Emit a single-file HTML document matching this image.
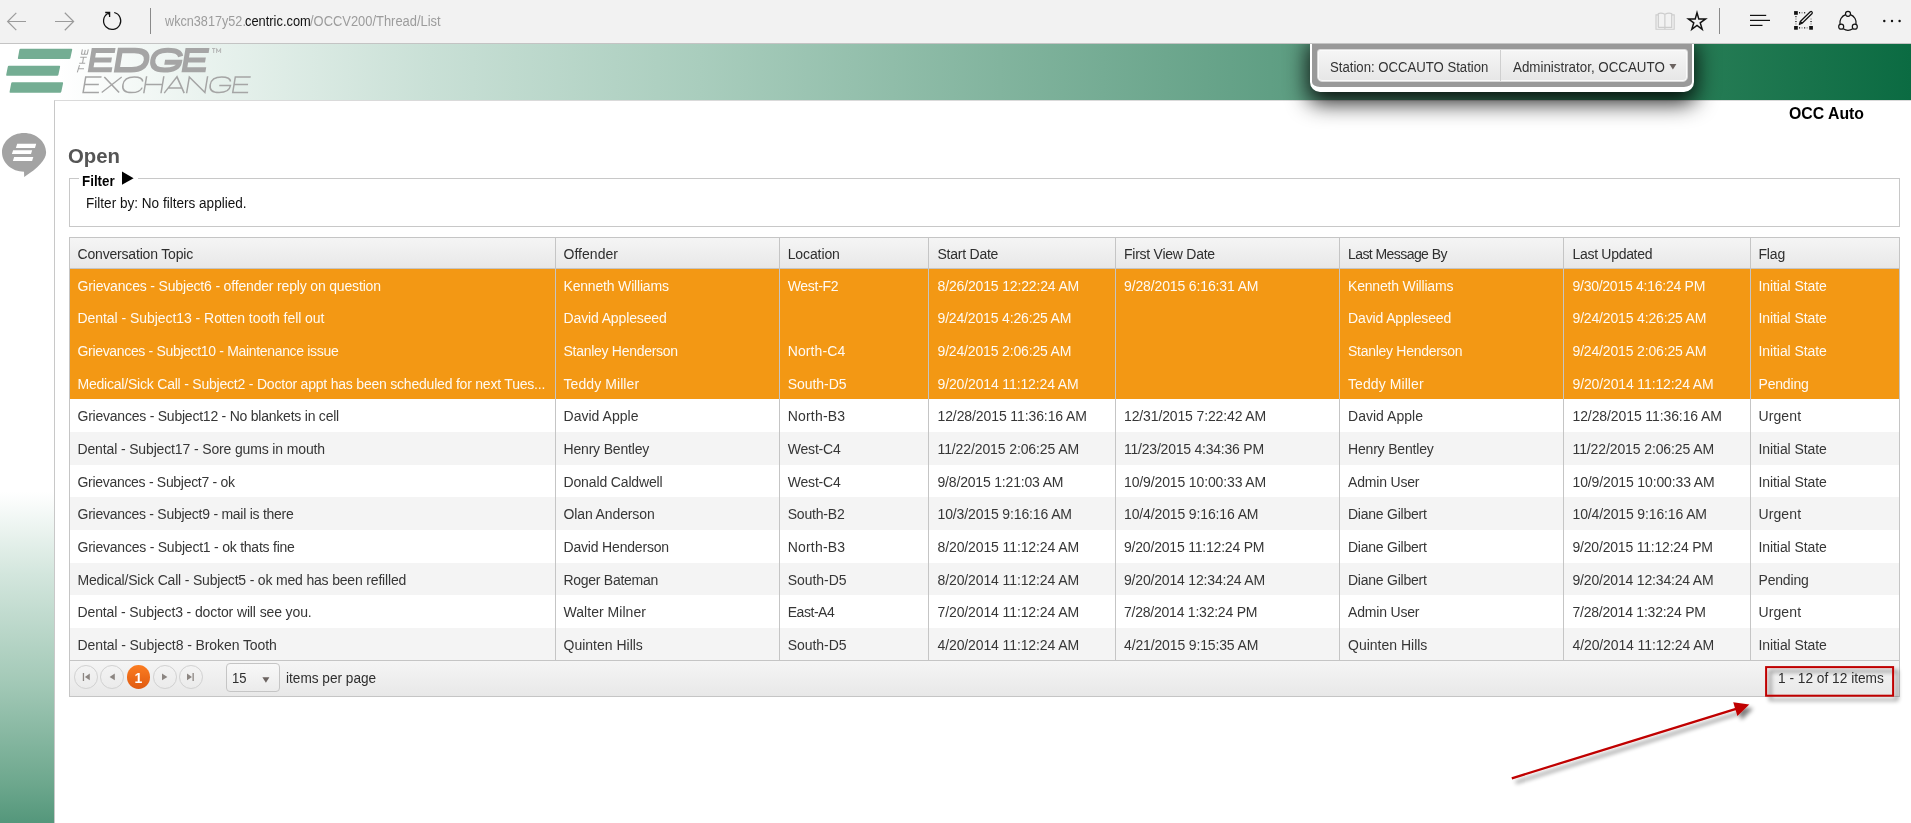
<!DOCTYPE html>
<html>
<head>
<meta charset="utf-8">
<title>Open</title>
<style>
*{box-sizing:border-box;}
html,body{margin:0;padding:0;}
body{width:1911px;height:823px;overflow:hidden;background:#fff;position:relative;font-family:"Liberation Sans",sans-serif;color:#2e2e2e;}
#w{position:absolute;left:0;top:0;width:1911px;height:823px;overflow:hidden;will-change:transform;}
.abs{position:absolute;}
/* browser toolbar */
#tb{left:0;top:0;width:1911px;height:44px;background:#f2f2f2;border-bottom:1px solid #c4c4c4;z-index:20;}
#u2{color:#111 !important;}
.u{top:12px;font-size:14px;line-height:18px;color:#9c9c9c;white-space:nowrap;transform-origin:0 0;z-index:21;}
/* header */
#hdr{left:0;top:44px;width:1911px;height:56px;background:linear-gradient(to right,#ffffff 0px,#ffffff 60px,#eaf3ef 200px,#c9e0d6 430px,#a9cdbd 700px,#82b49e 1000px,#609f84 1270px,#267c55 1700px,#0b6b42 1911px);}
/* sidebar */
#side{left:0;top:100px;width:54px;height:723px;background:linear-gradient(to bottom,#ffffff 0px,#ffffff 392px,#d3e6dd 474px,#a3c9b7 582px,#6ea88e 682px,#54977b 723px);}
#main{left:54px;top:100px;width:1857px;height:723px;background:#fff;border-left:1px solid #c8c8c8;border-top:1px solid #dadada;}
/* user panel */
#panel{left:1310px;top:36px;width:384px;height:56px;background:#999;border:solid #fff;border-width:2px 2px 5px 2px;border-radius:0 0 10px 10px;box-shadow:0 9px 22px 2px rgba(0,0,0,.88);z-index:10;}
#menu{left:1317px;top:49px;width:371px;height:33px;background:linear-gradient(#f6f6f6,#e6e6e6);border:1px solid #d8d8d8;border-radius:3px 3px 5px 5px;z-index:11;box-shadow:inset 0 0 0 1px #fafafa;}
.mtxt{top:58px;font-size:14px;line-height:18px;white-space:nowrap;color:#333;z-index:12;transform-origin:0 0;}
/* text */
#occ{top:103.7px;font-weight:bold;font-size:15.8px;line-height:20px;color:#000;white-space:nowrap;transform-origin:0 0;}
#open{top:143px;font-weight:bold;font-size:20px;line-height:26px;color:#555;white-space:nowrap;transform-origin:0 0;}
#fs{left:69px;top:178px;width:1831px;height:49px;border:1px solid #c8c8c8;}
#leg{left:79px;top:170px;width:59px;height:18px;background:#fff;}
#legt{top:172px;font-weight:bold;font-size:14px;line-height:18px;color:#000;white-space:nowrap;transform-origin:0 0;}
#fby{top:194px;font-size:14px;line-height:18px;white-space:nowrap;color:#111;transform-origin:0 0;}
/* grid */
#grid{left:69px;top:237px;width:1831px;height:460px;border:1px solid #c5c5c5;}
#gh{left:70px;top:238px;width:1829px;height:31px;background:linear-gradient(#f5f5f5,#e8e8e8);border-bottom:1px solid #c5c5c5;}
.row{left:70px;width:1829px;color:#363636;}
.row.sel{color:#fffaf3;}
.alt{background:#f4f4f4;}
.sel{background:#f39814;color:#fffaf3;}
.c{position:absolute;top:1px;font-size:14px;letter-spacing:-0.18px;line-height:32px;white-space:nowrap;}
.h .c{top:1px;line-height:31px;}
.vl{top:238px;width:1px;height:422px;background:#c5c5c5;}
#pg{left:70px;top:660px;width:1829px;height:36px;background:linear-gradient(#f5f5f5,#e8e8e8);border-top:1px solid #c5c5c5;}
.pb{top:665px;width:23.8px;height:23.8px;border-radius:50%;border:1px solid #d1d1d1;}
#p1{background:linear-gradient(#fb7d22,#e05a10);}
#p1t{left:134.4px;top:669px;font-weight:bold;font-size:14px;line-height:18px;color:#fff;}
.pt{top:669px;font-size:14px;line-height:18px;color:#2e2e2e;white-space:nowrap;transform-origin:0 0;}
#sel{left:226px;top:663px;width:54px;height:29px;border:1px solid #c5c5c5;border-radius:4px;background:linear-gradient(#f8f8f8,#ebebeb);}
</style>
</head>
<body>
<div id="w">
<div id="hdr" class="abs"></div>
<div id="side" class="abs"></div>
<div id="main" class="abs"></div>
<div id="tb" class="abs"></div>
<svg class="abs" style="left:0;top:0;z-index:21" width="1911" height="44" viewBox="0 0 1911 44" fill="none" stroke-linecap="butt">
<g stroke="#9b9b9b" stroke-width="1.2">
<path d="M7.5 21.5H26M16.3 12.8L7.6 21.5L16.3 30.2"/>
<path d="M55 21.5H73.8M64.8 12.8L73.6 21.5L64.8 30.2"/>
</g>
<g stroke="#111" stroke-width="1.25">
<path d="M114.2 12.5A8.6 8.6 0 1 1 107.7 13.5"/>
<path d="M105.2 12.5H109.6V16.9" stroke-width="1.3"/>
<path d="M106.4 12.6H109.5V15.6Z" fill="#111" stroke="none"/>
</g>
<path d="M150.5 8V34" stroke="#8a8a8a" stroke-width="1"/>
<g stroke="#cdcdcd" stroke-width="1.1">
<path d="M1658.2 14.9H1656V29.2H1674.2V14.9H1672"/>
<path d="M1658.3 27.4V13.6Q1661.5 12.6 1664.9 14.2Q1668.3 12.6 1671.7 13.6V27.4H1665.4M1658.3 27.4H1664.4M1664.9 14.2V29.2" stroke-width="1.2"/>
</g>
<path d="M1697.0 12.7L1698.8 18.9L1705.6 18.9L1700.2 22.8L1702.2 29.4L1697.0 25.4L1691.8 29.4L1693.8 22.8L1688.4 18.9L1695.2 18.9Z" stroke="#111" stroke-width="1.45" stroke-linejoin="miter" stroke-miterlimit="10"/>
<path d="M1719.5 8V34" stroke="#8a8a8a" stroke-width="1"/>
<g fill="#111" stroke="none">
<rect x="1750" y="14.8" width="16.2" height="1.2"/><rect x="1750" y="19.8" width="20" height="1.2"/><rect x="1750" y="24.8" width="12.5" height="1.2"/>
</g>
<g fill="#111" stroke="none">
<rect x="1794.1" y="11.1" width="3.7" height="3.7"/><rect x="1794.1" y="26" width="3.7" height="3.7"/><rect x="1809.2" y="26" width="3.7" height="3.7"/>
<rect x="1799" y="12.1" width="1.1" height="1.3"/><rect x="1801.5" y="12.1" width="1.1" height="1.3" opacity=".45"/><rect x="1804.1" y="12.1" width="1.1" height="1.3"/>
<rect x="1799" y="27.2" width="1.1" height="1.3"/><rect x="1801.5" y="27.2" width="1.1" height="1.3" opacity=".45"/><rect x="1804.1" y="27.2" width="1.1" height="1.3"/><rect x="1806.6" y="27.2" width="1.1" height="1.3" opacity=".45"/>
<rect x="1795.3" y="16.1" width="1.3" height="1.1"/><rect x="1795.3" y="18.5" width="1.3" height="1.1" opacity=".45"/><rect x="1795.3" y="21" width="1.3" height="1.1"/><rect x="1795.3" y="23.4" width="1.3" height="1.1" opacity=".45"/>
<rect x="1810.4" y="18.5" width="1.3" height="1.1" opacity=".45"/><rect x="1810.4" y="21" width="1.3" height="1.1"/><rect x="1810.4" y="23.4" width="1.3" height="1.1" opacity=".45"/>
</g>
<path d="M1810.3 11.7L1800.3 21.5L1799.4 24.5L1802.1 23.3L1812.1 13.5A1.3 1.3 0 0 0 1810.3 11.7ZM1800.3 21.5L1802.1 23.3" stroke="#111" stroke-width="1.25" fill="#f6f6f6" stroke-linejoin="round"/>
<g stroke="#111" stroke-width="1.2">
<path d="M1845.6 14.6A8.6 8.6 0 0 0 1840 24.4M1843.2 28.8A8.8 8.8 0 0 0 1852.8 28.8M1856 24.4A8.6 8.6 0 0 0 1850.4 14.6"/>
<circle cx="1848" cy="13.8" r="2.5"/><circle cx="1841.2" cy="26.7" r="2.5"/><circle cx="1854.8" cy="26.7" r="2.5"/>
</g>
<g fill="#111" stroke="none"><circle cx="1884.3" cy="21" r="1.2"/><circle cx="1892" cy="21" r="1.2"/><circle cx="1899.6" cy="21" r="1.2"/></g>
</svg>
<div id="u1" style="/*fit*/left:164.76px;transform:scaleX(0.9038)" class="abs u sx">wkcn3817y52.</div><div id="u2" style="/*fit*/left:245.05px;transform:scaleX(0.9193)" class="abs u sx">centric.com</div><div id="u3" style="/*fit*/left:310.05px;transform:scaleX(0.9222)" class="abs u sx">/OCCV200/Thread/List</div>
<svg class="abs" style="left:0;top:44px" width="270" height="57" viewBox="0 44 270 57">
<g fill="#74ad93">
<path d="M20.5 48.8H71.5Q72.4 48.8 72.2 49.8L70.4 58Q70.2 59 69.2 59H18.6Q17.6 59 17.9 58L19.4 49.8Q19.6 48.8 20.5 48.8Z"/>
<path d="M8.9 65.8H59.4Q60.3 65.8 60.1 66.8L58.4 74.8Q58.2 75.8 57.2 75.8H6.9Q5.9 75.8 6.2 74.8L7.8 66.8Q8 65.8 8.9 65.8Z"/>
<path d="M12.3 82.3H62.4Q63.3 82.3 63.1 83.3L61.3 91.8Q61.1 92.8 60.1 92.8H10.3Q9.3 92.8 9.6 91.8L11.2 83.3Q11.4 82.3 12.3 82.3Z"/>
</g>
<g transform="translate(0,72.3) skewX(-9.5) translate(0,-72.3)" fill="none" stroke="#a5a5a5" stroke-width="5">
<path d="M111.5 50.5H90.2V69.8H111.5M90.2 60.1H109.5" stroke-linejoin="miter"/>
<path d="M116.5 50.5H131Q144.5 50.5 144.5 60.1Q144.5 69.8 131 69.8H116.5Z" stroke-width="5.4"/>
<path d="M178 56.5Q176 50.3 164 50.3Q150.8 50.3 150.8 60.1Q150.8 70 164 70Q177.5 70 177.8 62.3H163" />
<path d="M205.4 50.5H184V69.8H205.4M184 60.1H203.4"/>
</g>
<g transform="translate(0,93.2) skewX(-9.5) translate(0,-93.2)" fill="none" stroke="#a5a5a5" stroke-width="1.5">
<path d="M98.8 77H83V92.5H98.8M83 84.6H97.4"/>
<path d="M101.6 77L119 92.5M119 77L101.6 92.5"/>
<path d="M140.8 81.5Q139.5 77 131.5 77Q121.5 77 121.5 84.7Q121.5 92.6 131.5 92.6Q139.8 92.6 141.2 87.6"/>
<path d="M143.8 76.3V93.2M161 76.3V93.2M143.8 84.5H161"/>
<path d="M164.2 93.2L174.2 76.8L184.2 93.2M167.6 88H180.8"/>
<path d="M186.6 93.2V77L204.8 92.5V76.3"/>
<path d="M228.6 81.5Q227.3 77 219 77Q208.8 77 208.8 84.7Q208.8 92.6 219 92.6Q229.2 92.6 229.2 85.6H218"/>
<path d="M248 77H232.6V92.5H248M232.6 84.6H246.6"/>
</g>
<g fill="none" stroke="#a5a5a5" stroke-width="1">
<path d="M77.3 72.4L79.5 65.2M78.6 68.7H84M79.2 63.3H85.2M80.2 57.3H86.8M82.5 63.3L83.5 57.3M81.2 54.3H87.4M81.4 54.3L82.4 49.3M84.3 54.3L85.3 49.8M87.2 54.3L88.3 49.3" stroke-width="1.05"/>
<path d="M212 48.5H215.4M213.7 48.5V53M216.6 53V48.5L218.6 52L220.6 48.5V53" stroke-width=".9" stroke="#b0b0b0"/>
</g>
</svg>
<div id="panel" class="abs"></div>
<div id="menu" class="abs"></div>
<div class="abs" style="left:1500px;top:50px;width:1px;height:31px;background:#cfcfcf;z-index:12"></div>
<div class="abs mtxt sx" id="m1" style="/*fit*/left:1329.94px;transform:scaleX(0.9395)">Station: OCCAUTO Station</div>
<div class="abs mtxt sx" id="m2" style="/*fit*/left:1513.13px;transform:scaleX(0.9533)">Administrator, OCCAUTO</div>
<svg class="abs" style="left:1668px;top:63px;z-index:12" width="10" height="8" viewBox="0 0 10 8"><path d="M1.4 1H8.4L4.9 6.4Z" fill="#6b6360"/></svg>
<svg class="abs" style="left:0;top:125px" width="54" height="60" viewBox="0 125 54 60">
<path d="M24 132.9C36.2 132.9 46.1 141.6 46.1 152.3C46.1 160 38 168 24.2 177L24 171.7C11.8 171.7 2 163 2 152.3C2 141.6 11.8 132.9 24 132.9Z" fill="#a3a3a3"/>
<g fill="#fff">
<path d="M17.2 143.8H36.2L35 148H15.9Z"/>
<path d="M13.1 150.2H32.2L31 154H11.9Z"/>
<path d="M14.1 157H33.3L32.1 160.9H12.9Z"/>
</g>
</svg>
<div id="occ" style="/*fit*/left:1788.80px;transform:scaleX(1.0017)" class="abs sx">OCC Auto</div>
<div id="open" style="/*fit*/left:68.09px;transform:scaleX(1.0171)" class="abs sx">Open</div>
<div id="fs" class="abs"></div>
<div id="leg" class="abs"></div>
<div id="legt" style="/*fit*/left:81.93px;transform:scaleX(0.9552)" class="abs sx">Filter</div>
<svg class="abs" style="left:121px;top:170px" width="14" height="16" viewBox="0 0 14 16"><path d="M1 1.5L12.6 8.2L1 14.8Z" fill="#000"/></svg>
<div id="fby" style="/*fit*/left:85.92px;transform:scaleX(0.9690)" class="abs sx">Filter by: No filters applied.</div>
<!--GRID-S-->
<div id="grid" class="abs"></div>
<div id="gh" class="abs h">
<span class="c" style="left:7.5px">Conversation Topic</span>
<span class="c" style="left:493.5px;letter-spacing:0.03px">Offender</span>
<span class="c" style="left:717.7px;letter-spacing:-0.11px">Location</span>
<span class="c" style="left:867.5px;letter-spacing:-0.24px">Start Date</span>
<span class="c" style="left:1054.0px;letter-spacing:-0.25px">First View Date</span>
<span class="c" style="left:1278.0px;letter-spacing:-0.57px">Last Message By</span>
<span class="c" style="left:1502.5px;letter-spacing:-0.30px">Last Updated</span>
<span class="c" style="left:1688.5px">Flag</span>
</div>
<div class="abs row sel" style="top:269px;height:32px">
<span class="c" style="left:7.5px;letter-spacing:-0.17px">Grievances - Subject6 - offender reply on question</span>
<span class="c" style="left:493.5px">Kenneth Williams</span>
<span class="c" style="left:717.7px;letter-spacing:-0.28px">West-F2</span>
<span class="c" style="left:867.5px;letter-spacing:-0.15px">8/26/2015 12:22:24 AM</span>
<span class="c" style="left:1054.0px;letter-spacing:-0.13px">9/28/2015 6:16:31 AM</span>
<span class="c" style="left:1278.0px">Kenneth Williams</span>
<span class="c" style="left:1502.5px;letter-spacing:-0.26px">9/30/2015 4:16:24 PM</span>
<span class="c" style="left:1688.5px;letter-spacing:-0.08px">Initial State</span>
</div>
<div class="abs row sel" style="top:301px;height:33px">
<span class="c" style="left:7.5px;letter-spacing:-0.05px">Dental - Subject13 - Rotten tooth fell out</span>
<span class="c" style="left:493.5px;letter-spacing:-0.13px">David Appleseed</span>
<span class="c" style="left:867.5px;letter-spacing:-0.16px">9/24/2015 4:26:25 AM</span>
<span class="c" style="left:1278.0px;letter-spacing:-0.13px">David Appleseed</span>
<span class="c" style="left:1502.5px;letter-spacing:-0.16px">9/24/2015 4:26:25 AM</span>
<span class="c" style="left:1688.5px;letter-spacing:-0.08px">Initial State</span>
</div>
<div class="abs row sel" style="top:334px;height:33px">
<span class="c" style="left:7.5px;letter-spacing:-0.33px">Grievances - Subject10 - Maintenance issue</span>
<span class="c" style="left:493.5px;letter-spacing:-0.28px">Stanley Henderson</span>
<span class="c" style="left:717.7px;letter-spacing:0.10px">North-C4</span>
<span class="c" style="left:867.5px;letter-spacing:-0.16px">9/24/2015 2:06:25 AM</span>
<span class="c" style="left:1278.0px;letter-spacing:-0.28px">Stanley Henderson</span>
<span class="c" style="left:1502.5px;letter-spacing:-0.16px">9/24/2015 2:06:25 AM</span>
<span class="c" style="left:1688.5px;letter-spacing:-0.08px">Initial State</span>
</div>
<div class="abs row sel" style="top:367px;height:32px">
<span class="c" style="left:7.5px;letter-spacing:-0.21px">Medical/Sick Call - Subject2 - Doctor appt has been scheduled for next Tues...</span>
<span class="c" style="left:493.5px;letter-spacing:0.08px">Teddy Miller</span>
<span class="c" style="left:717.7px;letter-spacing:-0.03px">South-D5</span>
<span class="c" style="left:867.5px;letter-spacing:-0.13px">9/20/2014 11:12:24 AM</span>
<span class="c" style="left:1278.0px;letter-spacing:0.08px">Teddy Miller</span>
<span class="c" style="left:1502.5px;letter-spacing:-0.13px">9/20/2014 11:12:24 AM</span>
<span class="c" style="left:1688.5px">Pending</span>
</div>
<div class="abs row " style="top:399px;height:33px">
<span class="c" style="left:7.5px;letter-spacing:-0.23px">Grievances - Subject12 - No blankets in cell</span>
<span class="c" style="left:493.5px;letter-spacing:0.02px">David Apple</span>
<span class="c" style="left:717.7px;letter-spacing:0.20px">North-B3</span>
<span class="c" style="left:867.5px;letter-spacing:-0.10px">12/28/2015 11:36:16 AM</span>
<span class="c" style="left:1054.0px;letter-spacing:-0.13px">12/31/2015 7:22:42 AM</span>
<span class="c" style="left:1278.0px;letter-spacing:0.02px">David Apple</span>
<span class="c" style="left:1502.5px;letter-spacing:-0.10px">12/28/2015 11:36:16 AM</span>
<span class="c" style="left:1688.5px;letter-spacing:0.10px">Urgent</span>
</div>
<div class="abs row alt" style="top:432px;height:33px">
<span class="c" style="left:7.5px;letter-spacing:-0.14px">Dental - Subject17 - Sore gums in mouth</span>
<span class="c" style="left:493.5px">Henry Bentley</span>
<span class="c" style="left:717.7px">West-C4</span>
<span class="c" style="left:867.5px;letter-spacing:-0.11px">11/22/2015 2:06:25 AM</span>
<span class="c" style="left:1054.0px;letter-spacing:-0.22px">11/23/2015 4:34:36 PM</span>
<span class="c" style="left:1278.0px">Henry Bentley</span>
<span class="c" style="left:1502.5px;letter-spacing:-0.11px">11/22/2015 2:06:25 AM</span>
<span class="c" style="left:1688.5px;letter-spacing:-0.08px">Initial State</span>
</div>
<div class="abs row " style="top:465px;height:32px">
<span class="c" style="left:7.5px;letter-spacing:-0.30px">Grievances - Subject7 - ok</span>
<span class="c" style="left:493.5px;letter-spacing:-0.14px">Donald Caldwell</span>
<span class="c" style="left:717.7px">West-C4</span>
<span class="c" style="left:867.5px">9/8/2015 1:21:03 AM</span>
<span class="c" style="left:1054.0px;letter-spacing:-0.13px">10/9/2015 10:00:33 AM</span>
<span class="c" style="left:1278.0px">Admin User</span>
<span class="c" style="left:1502.5px;letter-spacing:-0.13px">10/9/2015 10:00:33 AM</span>
<span class="c" style="left:1688.5px;letter-spacing:-0.08px">Initial State</span>
</div>
<div class="abs row alt" style="top:497px;height:33px">
<span class="c" style="left:7.5px;letter-spacing:-0.26px">Grievances - Subject9 - mail is there</span>
<span class="c" style="left:493.5px;letter-spacing:-0.12px">Olan Anderson</span>
<span class="c" style="left:717.7px">South-B2</span>
<span class="c" style="left:867.5px;letter-spacing:-0.13px">10/3/2015 9:16:16 AM</span>
<span class="c" style="left:1054.0px;letter-spacing:-0.13px">10/4/2015 9:16:16 AM</span>
<span class="c" style="left:1278.0px;letter-spacing:-0.24px">Diane Gilbert</span>
<span class="c" style="left:1502.5px;letter-spacing:-0.13px">10/4/2015 9:16:16 AM</span>
<span class="c" style="left:1688.5px;letter-spacing:0.10px">Urgent</span>
</div>
<div class="abs row " style="top:530px;height:33px">
<span class="c" style="left:7.5px;letter-spacing:-0.23px">Grievances - Subject1 - ok thats fine</span>
<span class="c" style="left:493.5px">David Henderson</span>
<span class="c" style="left:717.7px;letter-spacing:0.20px">North-B3</span>
<span class="c" style="left:867.5px;letter-spacing:-0.11px">8/20/2015 11:12:24 AM</span>
<span class="c" style="left:1054.0px;letter-spacing:-0.20px">9/20/2015 11:12:24 PM</span>
<span class="c" style="left:1278.0px;letter-spacing:-0.24px">Diane Gilbert</span>
<span class="c" style="left:1502.5px;letter-spacing:-0.20px">9/20/2015 11:12:24 PM</span>
<span class="c" style="left:1688.5px;letter-spacing:-0.08px">Initial State</span>
</div>
<div class="abs row alt" style="top:563px;height:32px">
<span class="c" style="left:7.5px">Medical/Sick Call - Subject5 - ok med has been refilled</span>
<span class="c" style="left:493.5px;letter-spacing:-0.28px">Roger Bateman</span>
<span class="c" style="left:717.7px;letter-spacing:-0.03px">South-D5</span>
<span class="c" style="left:867.5px;letter-spacing:-0.11px">8/20/2014 11:12:24 AM</span>
<span class="c" style="left:1054.0px;letter-spacing:-0.18px">9/20/2014 12:34:24 AM</span>
<span class="c" style="left:1278.0px;letter-spacing:-0.24px">Diane Gilbert</span>
<span class="c" style="left:1502.5px;letter-spacing:-0.18px">9/20/2014 12:34:24 AM</span>
<span class="c" style="left:1688.5px">Pending</span>
</div>
<div class="abs row " style="top:595px;height:33px">
<span class="c" style="left:7.5px;letter-spacing:-0.12px">Dental - Subject3 - doctor will see you.</span>
<span class="c" style="left:493.5px;letter-spacing:0.04px">Walter Milner</span>
<span class="c" style="left:717.7px;letter-spacing:-0.45px">East-A4</span>
<span class="c" style="left:867.5px;letter-spacing:-0.11px">7/20/2014 11:12:24 AM</span>
<span class="c" style="left:1054.0px;letter-spacing:-0.23px">7/28/2014 1:32:24 PM</span>
<span class="c" style="left:1278.0px">Admin User</span>
<span class="c" style="left:1502.5px;letter-spacing:-0.23px">7/28/2014 1:32:24 PM</span>
<span class="c" style="left:1688.5px;letter-spacing:0.10px">Urgent</span>
</div>
<div class="abs row alt" style="top:628px;height:32px">
<span class="c" style="left:7.5px;letter-spacing:-0.09px">Dental - Subject8 - Broken Tooth</span>
<span class="c" style="left:493.5px;letter-spacing:-0.00px">Quinten Hills</span>
<span class="c" style="left:717.7px;letter-spacing:-0.03px">South-D5</span>
<span class="c" style="left:867.5px;letter-spacing:-0.11px">4/20/2014 11:12:24 AM</span>
<span class="c" style="left:1054.0px;letter-spacing:-0.14px">4/21/2015 9:15:35 AM</span>
<span class="c" style="left:1278.0px;letter-spacing:-0.00px">Quinten Hills</span>
<span class="c" style="left:1502.5px;letter-spacing:-0.11px">4/20/2014 11:12:24 AM</span>
<span class="c" style="left:1688.5px;letter-spacing:-0.08px">Initial State</span>
</div>
<div class="abs vl" style="left:555px"></div>
<div class="abs vl" style="left:779px"></div>
<div class="abs vl" style="left:928px"></div>
<div class="abs vl" style="left:1115px"></div>
<div class="abs vl" style="left:1339px"></div>
<div class="abs vl" style="left:1563px"></div>
<div class="abs vl" style="left:1750px"></div>
<!--GRID-E-->
<div id="pg" class="abs"></div>
<div class="abs pb" style="left:74px"></div>
<div class="abs pb" style="left:100px"></div>
<div class="abs" id="p1" style="left:126.8px;top:664.8px;width:23.6px;height:24px;border-radius:50%"></div>
<div class="abs" id="p1t">1</div>
<div class="abs pb" style="left:153px"></div>
<div class="abs pb" style="left:179px"></div>
<svg class="abs" style="left:70px;top:661px" width="140" height="35" viewBox="70 661 140 35" fill="#8c8682">
<path d="M82.8 673H84.1V681H82.8ZM89.8 673.5V680.3L84.9 676.9Z"/>
<path d="M114.8 673.5V680.3L109.6 676.9Z"/>
<path d="M162 673.5V680.3L167.4 676.9Z"/>
<path d="M192.5 673H193.8V681H192.5ZM187 673.5V680.3L192 676.9Z"/>
</svg>
<div id="sel" class="abs"></div>
<div class="abs sx pt" id="n15" style="/*fit*/left:231.64px;transform:scaleX(0.9308)">15</div>
<svg class="abs" style="left:261px;top:676px" width="10" height="8" viewBox="0 0 10 8"><path d="M1.4 1.2H8.4L4.9 6.8Z" fill="#6b6360"/></svg>
<div class="abs sx pt" id="ipp" style="/*fit*/left:285.72px;transform:scaleX(0.9740)">items per page</div>
<div class="abs sx pt" id="cnt" style="/*fit*/left:1777.91px;transform:scaleX(0.9790)">1 - 12 of 12 items</div>
<svg class="abs" style="left:1480px;top:650px;z-index:30;overflow:visible" width="431" height="173" viewBox="1480 650 431 173">
<defs><filter id="ds" x="-10%" y="-30%" width="130%" height="180%"><feGaussianBlur in="SourceAlpha" stdDeviation="2"/><feOffset dx="3.5" dy="4"/><feComponentTransfer><feFuncA type="linear" slope=".5"/></feComponentTransfer><feMerge><feMergeNode/><feMergeNode in="SourceGraphic"/></feMerge></filter></defs>
<g filter="url(#ds)">
<rect x="1766.1" y="667.1" width="127" height="28.6" fill="none" stroke="#c00000" stroke-width="2"/>
</g>
<g filter="url(#ds)">
<path d="M1511.8 778.3L1736 708.8" stroke="#c00000" stroke-width="2.3" fill="none"/>
<path d="M1749.3 704.5L1733.2 702.2L1737.4 716Z" fill="#c00000"/>
</g>
</svg>
</div>
</body>
</html>
